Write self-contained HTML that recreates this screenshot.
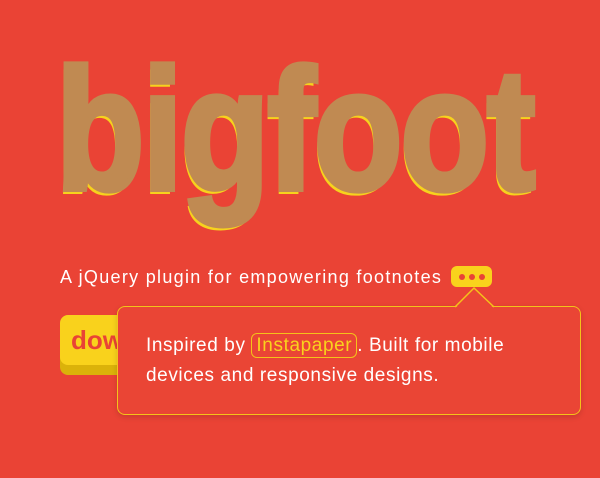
<!DOCTYPE html>
<html><head><style>
body{margin:0;width:600px;height:478px;background:#ea4335;overflow:hidden;position:relative;font-family:"Liberation Sans",sans-serif}
.logo{position:absolute;left:56px;top:44px;font-size:172px;font-weight:bold;color:#c08a52;letter-spacing:-2px;transform:scaleX(0.84);transform-origin:left top;text-shadow:-3px 5px 0 #f7d21d;line-height:1;-webkit-text-stroke:6px #c08a52}
.tag{position:absolute;left:60px;top:267px;font-size:18px;letter-spacing:1.3px;color:#fff}
.dots{position:absolute;left:451px;top:266px;width:41px;height:21px;background:#f9d21c;border-radius:6px}
.dots i{position:absolute;top:8px;width:6px;height:6px;border-radius:50%;background:#e94335}
.btn{position:absolute;left:60px;top:315px;width:120px;height:50px;background:#f9d21c;border-radius:8px;box-shadow:0 10px 0 #dbb20a}
.btn span{position:absolute;left:11px;top:10px;font-size:26px;font-weight:bold;color:#e94335}
.pop{position:absolute;left:117px;top:306px;width:462px;height:107px;border:1.5px solid #f5c21a;border-radius:8px;background:#ea4535;box-shadow:0 2px 6px rgba(0,0,0,.15)}
.pop p{margin:0;position:absolute;left:28px;top:24px;font-size:19px;letter-spacing:.6px;line-height:30px;color:#fff;width:400px}
.ins{color:#f9d21c;border:1px solid #f5c21a;border-radius:6px;padding:1px 4px}
</style></head><body>
<div class="logo">bigfoot</div>
<div class="tag">A jQuery plugin for empowering footnotes</div>
<div class="btn"><span>down</span></div>
<div class="pop"><p>Inspired by <span class="ins">Instapaper</span>. Built for mobile devices and responsive designs.</p></div>
<svg style="position:absolute;left:0;top:0" width="600" height="478"><path d="M456 307.5 L474 289 L493 307.5" fill="#ea4535" stroke="none"/><path d="M455 307 L474 288 L494 307" fill="none" stroke="#f5c21a" stroke-width="1.5"/></svg>
<div class="dots"><i style="left:8px"></i><i style="left:18px"></i><i style="left:28px"></i></div>
</body></html>
